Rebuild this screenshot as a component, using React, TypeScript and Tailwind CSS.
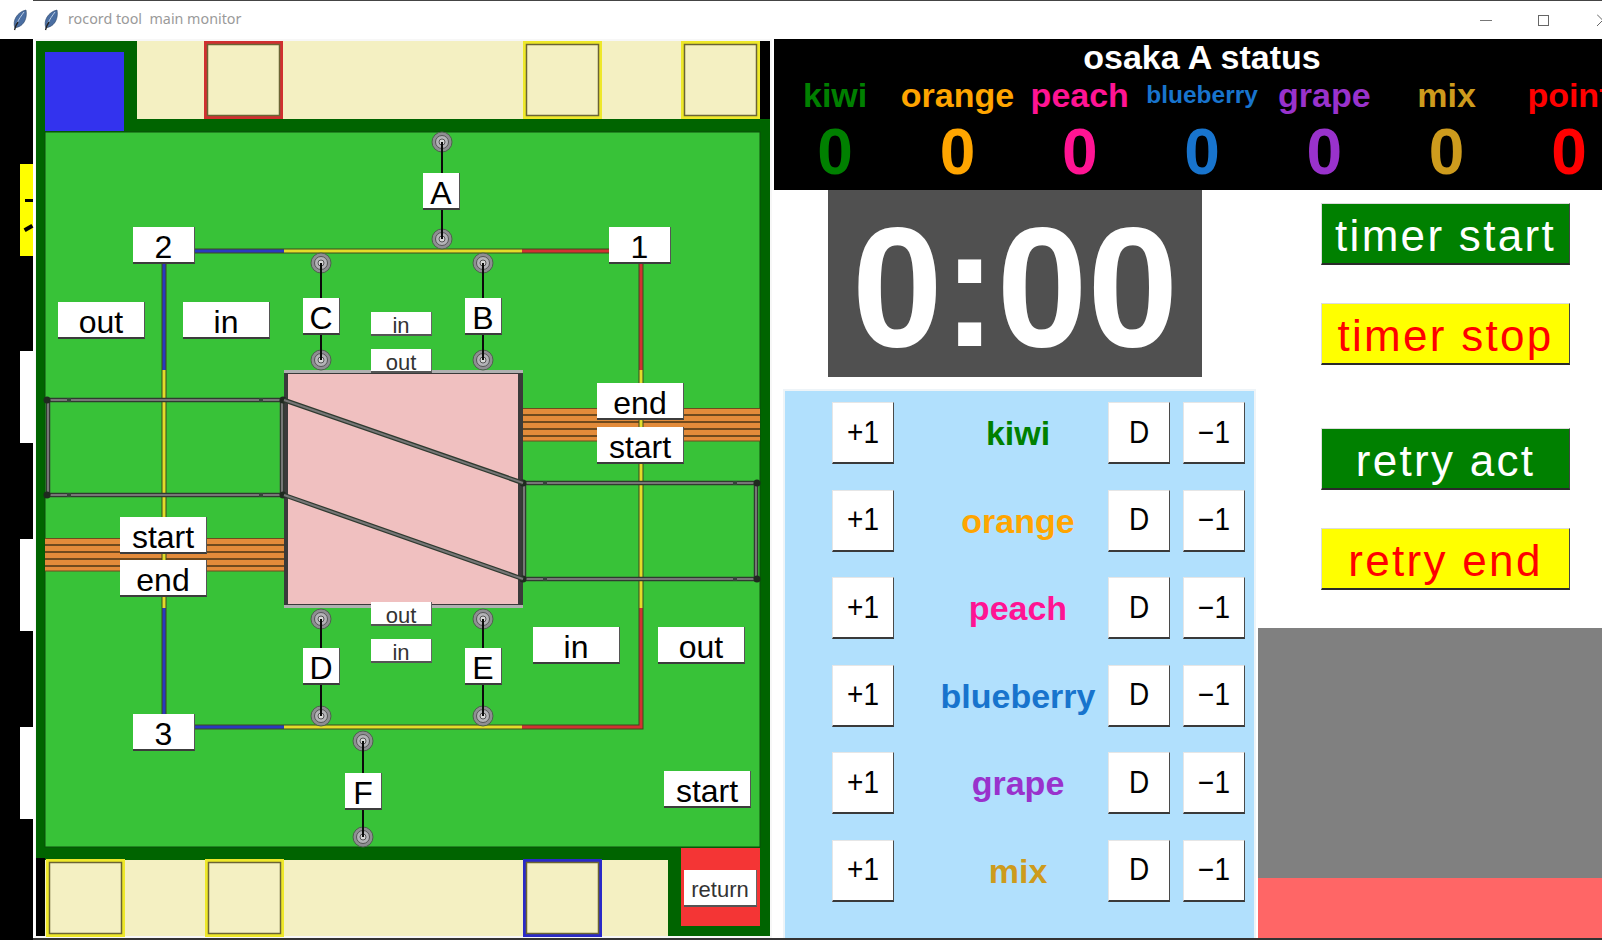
import React from "react";

const F = "font-['Liberation_Sans',Arial,sans-serif]";

function Feather() {
  return (
    <svg width="14" height="22" viewBox="0 0 14 22" className="block">
      <path d="M2 19 C-1 12 4 3 13 1 C14.5 9 11 16 5 18 Z" fill="#4a6ea2" stroke="#2e4668" strokeWidth="0.6" />
      <path d="M4 14 C6 10 8 7 11 3" stroke="#bccde2" strokeWidth="1" fill="none" />
      <path d="M1.5 21 C2.5 17 3.5 15 5 13" stroke="#222" strokeWidth="1.3" fill="none" />
    </svg>
  );
}

function BoardLabel({ className, children }: { className: string; children: React.ReactNode }) {
  return (
    <div
      className={`absolute flex items-center justify-center bg-white pt-[5px] text-black text-[32px] leading-none border-b-2 border-r border-b-[#3c3c3c] border-r-[#555] ${F} ${className}`}
    >
      {children}
    </div>
  );
}

function SmallLabel({ className, children }: { className: string; children: React.ReactNode }) {
  return (
    <div
      className={`absolute flex items-center justify-center bg-white pt-[5px] text-[#333] text-[22px] leading-none border-b-2 border-r border-b-[#555] border-r-[#666] ${F} ${className}`}
    >
      {children}
    </div>
  );
}

function Pin({ x, y }: { x: number; y: number }) {
  return (
    <g>
      <circle cx={x} cy={y} r="10" fill="#8e8e92" stroke="#4f5f4f" strokeWidth="1" />
      <circle cx={x} cy={y} r="6.5" fill="#b4b4b8" stroke="#555" strokeWidth="1" />
      <circle cx={x} cy={y} r="3" fill="#d8d8d8" stroke="#555" strokeWidth="1" />
    </g>
  );
}

function Wire({ points, color }: { points: string; color: string }) {
  return (
    <g fill="none">
      <polyline points={points} stroke="#3c4a1c" strokeWidth="5" />
      <polyline points={points} stroke={color} strokeWidth="3" />
    </g>
  );
}

function Rail({ x1, y1, x2, y2 }: { x1: number; y1: number; x2: number; y2: number }) {
  return (
    <g>
      <line x1={x1} y1={y1} x2={x2} y2={y2} stroke="#303a30" strokeWidth="4.5" />
      <line x1={x1} y1={y1} x2={x2} y2={y2} stroke="#767676" strokeWidth="2" />
    </g>
  );
}

function Box({ x, y, color }: { x: number; y: number; color: string }) {
  return (
    <g fill="none">
      <rect x={x + 1.5} y={y + 1.5} width="76" height="75" stroke={color} strokeWidth="3" />
      <rect x={x + 3.5} y={y + 3.5} width="72" height="71" stroke="#6b6434" strokeWidth="1.5" />
    </g>
  );
}

function Orange({ x, y, w }: { x: number; y: number; w: number }) {
  return (
    <g>
      <rect x={x} y={y} width={w} height="33" fill="#e38b3a" />
      {[0, 6, 13, 20, 27, 32.5].map((d) => (
        <rect key={d} x={x} y={y + d} width={w} height={d === 0 || d === 32.5 ? 1 : 2} fill="#6f4a1e" />
      ))}
    </g>
  );
}

function Frame({ x, y1, y2, w }: { x: number; y1: number; y2: number; w: number }) {
  return (
    <g>
      <Rail x1={x} y1={y1} x2={x + w} y2={y1} />
      <Rail x1={x} y1={y2} x2={x + w} y2={y2} />
      <Rail x1={x + 1} y1={y1} x2={x + 1} y2={y2} />
      <Rail x1={x + w - 1} y1={y1} x2={x + w - 1} y2={y2} />
      {[x, x + w].map((cx) =>
        [y1, y2].map((cy) => <circle key={`${cx}-${cy}`} cx={cx} cy={cy} r="3.5" fill="#1f2a1f" />),
      )}
      {[x + 22, x + w - 22].map((cx) =>
        [y1, y2].map((cy) => <rect key={`${cx}-${cy}`} x={cx - 2} y={cy - 2} width="4" height="4" fill="#36463a" />),
      )}
    </g>
  );
}

function BoardDrawing() {
  return (
    <svg viewBox="35 39 737 899" className="absolute inset-0 h-[899px] w-[737px]">
      <rect x="35" y="39" width="737" height="899" fill="#f7f7f7" />
      <rect x="36" y="41" width="734" height="895" fill="#006400" />
      <rect x="36" y="858" width="9" height="78" fill="#000" />
      <rect x="760" y="41" width="10" height="78" fill="#000" />
      <rect x="45" y="132" width="715" height="715" fill="#38c238" stroke="#0b4d0b" strokeWidth="1" />
      <rect x="45" y="52" width="79" height="79" fill="#3333ee" />
      <rect x="137" y="41" width="623" height="78" fill="#f4f0c2" />
      <rect x="45" y="860" width="623" height="76" fill="#f4f0c2" />
      <rect x="681" y="848" width="79" height="78" fill="#f43535" />
      <Box x={204} y={41} color="#d03030" />
      <Box x={523} y={41} color="#eee82a" />
      <Box x={681} y={41} color="#eee82a" />
      <Box x={46} y={859} color="#eee82a" />
      <Box x={205} y={859} color="#eee82a" />
      <Box x={523} y={859} color="#2a2ac8" />

      <Orange x={45} y={538} w={240} />
      <Orange x={522} y={408} w={238} />

      <Wire points="194,251 284,251" color="#2a3ac0" />
      <Wire points="284,251 522,251" color="#e2dc2a" />
      <Wire points="522,251 609,251" color="#d23232" />
      <Wire points="164,263 164,370" color="#2a3ac0" />
      <Wire points="164,370 164,608" color="#e2dc2a" />
      <Wire points="164,608 164,714" color="#2a3ac0" />
      <Wire points="641,263 641,370" color="#d23232" />
      <Wire points="641,370 641,608" color="#e2dc2a" />
      <Wire points="641,608 641,727 522,727" color="#d23232" />
      <Wire points="284,727 522,727" color="#e2dc2a" />
      <Wire points="194,727 284,727" color="#2a3ac0" />

      <rect x="284" y="370" width="239" height="238" fill="#b0b0b0" />
      <rect x="284" y="373" width="239" height="232" fill="#3a3a3a" />
      <rect x="288" y="374" width="230" height="230" fill="#f0c0c0" />

      <Frame x={47} y1={400} y2={495} w={236} />
      <Frame x={523} y1={483} y2={579} w={234} />
      <Rail x1={284} y1={400} x2={523} y2={483} />
      <Rail x1={284} y1={495} x2={523} y2={579} />

      {[
        [442, 142, 239],
        [321, 263, 360],
        [483, 263, 360],
        [321, 619, 716],
        [483, 619, 716],
        [363, 741, 837],
      ].map(([x, a, b]) => (
        <g key={`${x}-${a}`}>
          <Pin x={x} y={a} />
          <Pin x={x} y={b} />
          <line x1={x} y1={a} x2={x} y2={b} stroke="#0a0a0a" strokeWidth="2" />
        </g>
      ))}
    </svg>
  );
}

function Board() {
  return (
    <div className="relative h-[899px] w-[737px] shrink-0">
      <BoardDrawing />
      <BoardLabel className="left-[98px] top-[188px] h-[37px] w-[62px]">2</BoardLabel>
      <BoardLabel className="left-[574px] top-[188px] h-[37px] w-[62px]">1</BoardLabel>
      <BoardLabel className="left-[388px] top-[134px] h-[37px] w-[37px]">A</BoardLabel>
      <BoardLabel className="left-[268px] top-[259px] h-[37px] w-[37px]">C</BoardLabel>
      <BoardLabel className="left-[430px] top-[259px] h-[37px] w-[37px]">B</BoardLabel>
      <BoardLabel className="left-[23px] top-[263px] h-[37px] w-[87px]">out</BoardLabel>
      <BoardLabel className="left-[148px] top-[263px] h-[37px] w-[87px]">in</BoardLabel>
      <SmallLabel className="left-[336px] top-[273px] h-[24px] w-[61px]">in</SmallLabel>
      <SmallLabel className="left-[336px] top-[310px] h-[24px] w-[61px]">out</SmallLabel>
      <SmallLabel className="left-[336px] top-[563px] h-[24px] w-[61px]">out</SmallLabel>
      <SmallLabel className="left-[336px] top-[600px] h-[24px] w-[61px]">in</SmallLabel>
      <BoardLabel className="left-[85px] top-[478px] h-[37px] w-[87px]">start</BoardLabel>
      <BoardLabel className="left-[85px] top-[521px] h-[37px] w-[87px]">end</BoardLabel>
      <BoardLabel className="left-[562px] top-[344px] h-[37px] w-[87px]">end</BoardLabel>
      <BoardLabel className="left-[562px] top-[388px] h-[37px] w-[87px]">start</BoardLabel>
      <BoardLabel className="left-[268px] top-[609px] h-[37px] w-[37px]">D</BoardLabel>
      <BoardLabel className="left-[430px] top-[609px] h-[37px] w-[37px]">E</BoardLabel>
      <BoardLabel className="left-[98px] top-[675px] h-[37px] w-[62px]">3</BoardLabel>
      <BoardLabel className="left-[310px] top-[734px] h-[37px] w-[37px]">F</BoardLabel>
      <BoardLabel className="left-[498px] top-[588px] h-[37px] w-[87px]">in</BoardLabel>
      <BoardLabel className="left-[623px] top-[588px] h-[37px] w-[87px]">out</BoardLabel>
      <BoardLabel className="left-[629px] top-[732px] h-[37px] w-[87px]">start</BoardLabel>
      <SmallLabel className="left-[649px] top-[831px] h-[37px] w-[73px]">return</SmallLabel>
    </div>
  );
}

const STATUS = [
  { name: "kiwi", color: "text-[#008000]", size: "text-[34px]" },
  { name: "orange", color: "text-[#ffa500]", size: "text-[34px]" },
  { name: "peach", color: "text-[#ff1493]", size: "text-[34px]" },
  { name: "blueberry", color: "text-[#1874cd]", size: "text-[24.5px]" },
  { name: "grape", color: "text-[#9932cc]", size: "text-[34px]" },
  { name: "mix", color: "text-[#cd9b1d]", size: "text-[34px]" },
  { name: "point", color: "text-[#ff0000]", size: "text-[34px]" },
];

function StatusBar() {
  return (
    <div className={`h-[151px] w-[828px] overflow-hidden bg-black font-bold ${F}`}>
      <div className="h-[36px] w-[856px] text-center text-[34px] leading-[36px] text-white">osaka A status</div>
      <div className="grid w-[856px] grid-cols-[repeat(7,122.3px)]">
        {STATUS.map((s) => (
          <div key={s.name} className={`h-[40px] text-center leading-[40px] ${s.color} ${s.size}`}>
            {s.name}
          </div>
        ))}
        {STATUS.map((s) => (
          <div key={s.name} className={`h-[75px] text-center text-[64px] leading-[75px] ${s.color}`}>
            0
          </div>
        ))}
      </div>
    </div>
  );
}

function SquareButton({ children }: { children: React.ReactNode }) {
  return (
    <div
      className={`flex h-[62px] w-[62px] shrink-0 items-center justify-center bg-white text-[28px] text-black border-b-2 border-r border-t border-l border-b-[#3a3a3a] border-r-[#4a4a4a] border-t-[#e6e6e6] border-l-[#e6e6e6] ${F}`}
    >
      <span className="scale-y-[1.1]">{children}</span>
    </div>
  );
}

function CounterPanel() {
  return (
    <div className="ml-[11px] mt-[14px] flex w-[469px] flex-1 flex-col gap-[25.6px] bg-[#b1e0fd] pl-[47px] pt-[11px] shadow-[0_0_0_2px_#eef4f8]">
      {STATUS.slice(0, 6).map((s) => (
        <div key={s.name} className="flex items-center">
          <SquareButton>+1</SquareButton>
          <div className={`ml-[34px] w-[180px] text-center text-[34px] font-bold leading-none ${F} ${s.color}`}>
            {s.name}
          </div>
          <SquareButton>D</SquareButton>
          <div className="ml-[13px]">
            <SquareButton>−1</SquareButton>
          </div>
        </div>
      ))}
    </div>
  );
}

function ActionButton({ className, children }: { className: string; children: React.ReactNode }) {
  return (
    <div
      className={`ml-[63px] flex h-[62px] w-[249px] shrink-0 items-center justify-center pt-[4px] text-[44px] leading-none tracking-[2.3px] border-b-2 border-r border-b-[#2a2a2a] border-r-[#444] border-t border-l border-t-[#dcdcdc] border-l-[#dcdcdc] ${F} ${className}`}
    >
      {children}
    </div>
  );
}

export default function App() {
  return (
    <div className="flex h-[940px] w-[1602px] overflow-hidden bg-black">
      <div className="flex w-[33px] shrink-0 flex-col items-end bg-black">
        <div className="flex h-[39px] w-full items-center justify-end bg-white pr-[6px]">
          <Feather />
        </div>
        <div className="relative mt-[125px] h-[92px] w-[13px] bg-[#ffff00]">
          <div className="absolute left-[5px] top-[35px] h-[3px] w-[8px] bg-black" />
          <div className="absolute left-[4px] top-[62px] h-[4px] w-[9px] -rotate-30 bg-black" />
        </div>
        <div className="mt-[95px] h-[92px] w-[13px] bg-white" />
        <div className="mt-[96px] h-[92px] w-[13px] bg-white" />
        <div className="mt-[96px] h-[92px] w-[13px] bg-white" />
      </div>

      <div className="flex w-[1569px] shrink-0 flex-col bg-white">
        <div className="flex h-[39px] shrink-0 items-center border-t border-t-[#444] pl-[11px]">
          <Feather />
          <span className="ml-[10px] -mt-[2px] whitespace-pre text-[14.3px] text-[#9a9a9a] font-['Noto_Sans',sans-serif]">
            rocord tool  main monitor
          </span>
          <div className="ml-auto flex items-center">
            <div className="h-px w-[12px] bg-[#777]" />
            <div className="ml-[46px] h-[11px] w-[11px] border border-[#666]" />
            <svg width="5" height="12" viewBox="0 0 5 12" className="ml-[48px]">
              <path d="M0 0.5 L6 6.5 M0 12 L6 6" stroke="#666" strokeWidth="1" />
            </svg>
          </div>
        </div>

        <div className="flex h-[899px] shrink-0 pl-[2px]">
          <Board />
          <div className="ml-[2px] flex w-[828px] shrink-0 flex-col overflow-hidden">
            <StatusBar />
            <div className="flex h-[748px]">
              <div className="flex w-[484px] shrink-0 flex-col">
                <div
                  className={`ml-[54px] flex h-[187px] w-[374px] shrink-0 items-center justify-center bg-[#505050] pt-[5px] text-[163px] font-bold leading-none text-white ${F}`}
                >
                  <span className="scale-y-[1.05]">0:00</span>
                </div>
                <CounterPanel />
              </div>
              <div className="flex w-[344px] shrink-0 flex-col pt-[13px]">
                <ActionButton className="bg-[#008000] text-white">timer start</ActionButton>
                <ActionButton className="mt-[38px] bg-[#ffff00] text-[#ff0000]">timer stop</ActionButton>
                <ActionButton className="mt-[63px] bg-[#008000] text-white">retry act</ActionButton>
                <ActionButton className="mt-[38px] bg-[#ffff00] text-[#ff0000]">retry end</ActionButton>
                <div className="mt-auto h-[250px] w-full shrink-0 bg-[#808080]" />
                <div className="h-[60px] w-full shrink-0 bg-[#ff6666]" />
              </div>
            </div>
          </div>
        </div>
        <div className="h-[2px] shrink-0 bg-[#333]" />
      </div>
    </div>
  );
}
